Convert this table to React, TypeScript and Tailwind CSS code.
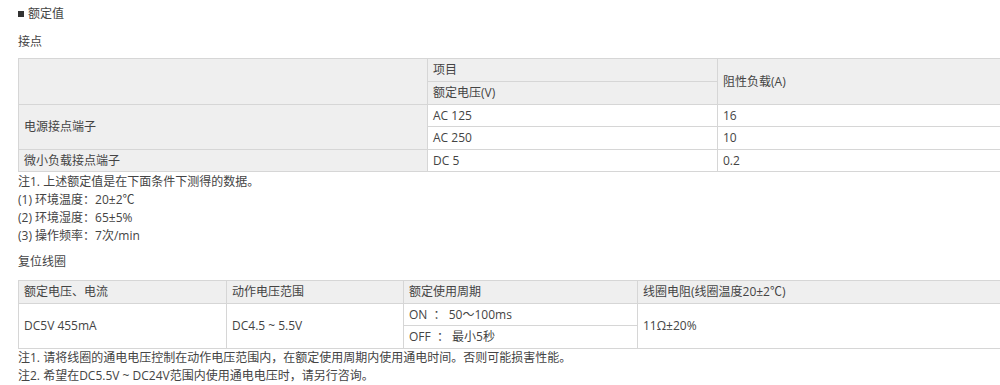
import React from 'react';

const th = 'border border-[#d6d6d6] bg-[#efefef] px-[5px] py-0 text-left font-normal align-middle';
const td = 'border border-[#d6d6d6] bg-white px-[5px] py-0 text-left align-middle';

export default function App() {
    return (
        <div
            className="w-[1000px] h-[385px] overflow-hidden bg-white text-[12px] leading-[18px] text-[#444]"
            style={{ fontFamily: '"Open Sans", "Noto Sans CJK SC", sans-serif' }}
        >
            <div className="pl-[18px]">
                <div className="pt-[5px] flex items-center gap-[4px]">
                    <span className="inline-block w-[6px] h-[6px] bg-[#333]" />
                    <span>额定值</span>
                </div>
                <div className="mt-[10px]">接点</div>

                {/* 接点 */}
                <table className="mt-[7px] w-[1100px] table-fixed border-collapse">
                    <colgroup>
                        <col className="w-[409px]" />
                        <col className="w-[290px]" />
                        <col />
                    </colgroup>
                    <tbody>
                        <tr className="h-[23px]">
                            <th rowSpan={2} className={th}></th>
                            <th className={th}>项目</th>
                            <th rowSpan={2} className={th}>阻性负载(A)</th>
                        </tr>
                        <tr className="h-[23px]">
                            <th className={th}>额定电压(V)</th>
                        </tr>
                        <tr className="h-[22px]">
                            <th rowSpan={2} className={th}>电源接点端子</th>
                            <td className={td}>AC 125</td>
                            <td className={td}>16</td>
                        </tr>
                        <tr className="h-[23px]">
                            <td className={td}>AC 250</td>
                            <td className={td}>10</td>
                        </tr>
                        <tr className="h-[22px]">
                            <th className={th}>微小负载接点端子</th>
                            <td className={td}>DC 5</td>
                            <td className={td}>0.2</td>
                        </tr>
                    </tbody>
                </table>

                <div className="mt-[1px]">
                    <p>注1. 上述额定值是在下面条件下测得的数据。</p>
                    <p>(1) 环境温度：20±2℃</p>
                    <p>(2) 环境湿度：65±5%</p>
                    <p>(3) 操作频率：7次/min</p>
                </div>

                <div className="mt-[8px]">复位线圈</div>

                {/* 复位线圈 */}
                <table className="mt-[9px] w-[1100px] table-fixed border-collapse">
                    <colgroup>
                        <col className="w-[208px]" />
                        <col className="w-[177px]" />
                        <col className="w-[234px]" />
                        <col />
                    </colgroup>
                    <tbody>
                        <tr className="h-[23px]">
                            <th className={th}>额定电压、电流</th>
                            <th className={th}>动作电压范围</th>
                            <th className={th}>额定使用周期</th>
                            <th className={th}>线圈电阻(线圈温度20±2℃)</th>
                        </tr>
                        <tr className="h-[22px]">
                            <td rowSpan={2} className={td}>DC5V 455mA</td>
                            <td rowSpan={2} className={td}>DC4.5 ~ 5.5V</td>
                            <td className={td}>ON&nbsp;&nbsp;：&nbsp;50～100ms</td>
                            <td rowSpan={2} className={td}>11Ω±20%</td>
                        </tr>
                        <tr className="h-[23px]">
                            <td className={td}>OFF&nbsp;&nbsp;：&nbsp;最小5秒</td>
                        </tr>
                    </tbody>
                </table>

                <div className="mt-[0px]">
                    <p>注1. 请将线圈的通电电压控制在动作电压范围内，在额定使用周期内使用通电时间。否则可能损害性能。</p>
                    <p>注2. 希望在DC5.5V ~ DC24V范围内使用通电电压时，请另行咨询。</p>
                </div>
            </div>
        </div>
    );
}
